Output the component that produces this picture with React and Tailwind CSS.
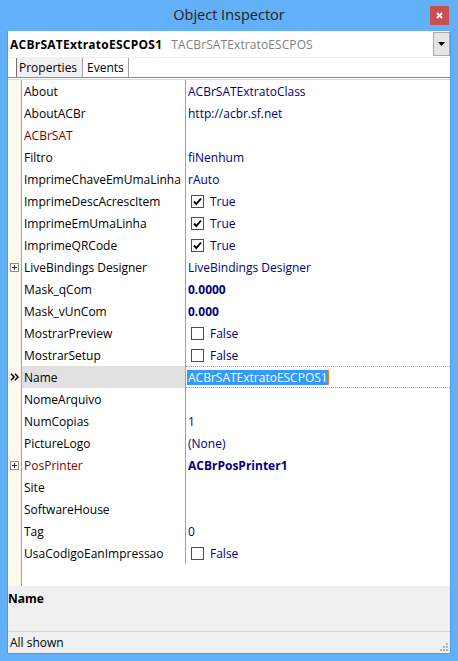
import React from "react";

const NAVY = "text-[#000080]";

const rows = [
  { name: "About", value: "ACBrSATExtratoClass" },
  { name: "AboutACBr", value: "http://acbr.sf.net" },
  { name: "ACBrSAT", maroon: true },
  { name: "Filtro", value: "fiNenhum" },
  { name: "ImprimeChaveEmUmaLinha", value: "rAuto" },
  { name: "ImprimeDescAcrescItem", check: true },
  { name: "ImprimeEmUmaLinha", check: true },
  { name: "ImprimeQRCode", check: true },
  { name: "LiveBindings Designer", plus: true, value: "LiveBindings Designer" },
  { name: "Mask_qCom", value: "0.0000", bold: true },
  { name: "Mask_vUnCom", value: "0.000", bold: true },
  { name: "MostrarPreview", check: false },
  { name: "MostrarSetup", check: false },
  { name: "Name", selected: true },
  { name: "NomeArquivo" },
  { name: "NumCopias", value: "1" },
  { name: "PictureLogo", value: "(None)" },
  { name: "PosPrinter", maroon: true, plus: true, value: "ACBrPosPrinter1", bold: true },
  { name: "Site" },
  { name: "SoftwareHouse" },
  { name: "Tag", value: "0" },
  { name: "UsaCodigoEanImpressao", check: false },
];

function PlusBox() {
  return (
    <svg width="9" height="9" viewBox="0 0 9 9" className="block">
      <rect x="0.5" y="0.5" width="8" height="8" fill="#fff" stroke="#8c8c8c" />
      <path d="M2 4.5h5M4.5 2v5" stroke="#303030" strokeWidth="1" />
    </svg>
  );
}

function Chevrons() {
  return (
    <svg width="9" height="8" viewBox="0 0 9 8" className="block">
      <path d="M1 0.8L4 4L1 7.2M5 0.8L8 4L5 7.2" fill="none" stroke="#000" strokeWidth="1.6" />
    </svg>
  );
}

function CheckBox({ checked }) {
  return (
    <svg width="13" height="13" viewBox="0 0 13 13" className="block">
      <rect x="0.5" y="0.5" width="12" height="12" fill="#fff" stroke="#4d4d4d" />
      {checked && (
        <path d="M3 6.5L5.3 9L10 3.5" fill="none" stroke="#000" strokeWidth="1.9" />
      )}
    </svg>
  );
}

function Row({ r }) {
  return (
    <div className="flex h-[22px]">
      <div className="w-[13px] shrink-0 bg-[#fdf9ee] flex items-center justify-center border-r border-[#a0a0a0] box-content">
        {r.plus && <PlusBox />}
        {r.selected && <Chevrons />}
      </div>
      <div
        className={`w-[163px] shrink-0 flex items-center pl-[2px] pt-[1px] overflow-hidden whitespace-nowrap ${
          r.selected ? "bg-[#e1e1e1]" : ""
        } ${r.maroon ? "text-[#800000]" : "text-black"}`}
      >
        {r.name}
      </div>
      <div className="w-[1px] shrink-0 bg-[#a0a0a0]" />
      {r.selected ? (
        <div className="flex-1 flex items-center pl-[1px] border-y border-dotted border-[#a0a0a0]">
          <span className="bg-[#3399ff] text-white leading-[15px] h-[15px] pl-[1px] border-r border-[#ff8000]">
            ACBrSATExtratoESCPOS1
          </span>
        </div>
      ) : r.check !== undefined ? (
        <div className={`flex-1 flex items-center pl-[5px] ${NAVY}`}>
          <CheckBox checked={r.check} />
          <span className="ml-[6px] pt-[1px]">{r.check ? "True" : "False"}</span>
        </div>
      ) : (
        <div className={`flex-1 flex items-center pl-[2px] pt-[1px] whitespace-nowrap ${NAVY} ${r.bold ? "font-bold" : ""}`}>
          {r.value || ""}
        </div>
      )}
    </div>
  );
}

function Grip() {
  const dots = [
    [6, 0],
    [3, 3], [6, 3],
    [0, 6], [3, 6], [6, 6],
  ];
  return (
    <svg width="8" height="8" viewBox="0 0 8 8" className="block">
      {dots.map(([x, y], i) => (
        <rect key={i} x={x} y={y} width="2" height="2" fill="#b4b4b4" />
      ))}
    </svg>
  );
}

export default function App() {
  return (
    <div className="w-[458px] h-[661px] bg-[#62b0f7] flex flex-col px-[7px] pb-[7px] font-['Open_Sans',sans-serif] text-[12px]">
      {/* title bar */}
      <div className="h-[31px] shrink-0 grid grid-cols-[1fr_auto_1fr] items-center">
        <div />
        <div className="text-[14.5px] text-[#1e1e1e] pb-[1px]">Object Inspector</div>
        <div className="flex justify-end pr-[2px] pb-[1px]">
          <div className="w-[19px] h-[19px] bg-[#c75050] flex items-center justify-center">
            <svg width="7" height="7" viewBox="0 0 7 7" className="block">
              <path d="M1 1L6 6M6 1L1 6" stroke="#fff" strokeWidth="1.8" />
            </svg>
          </div>
        </div>
      </div>

      {/* client */}
      <div className="flex-1 flex flex-col bg-white border-x border-b border-[#4d9ce4]">
        {/* combobox */}
        <div className="h-[26px] shrink-0 flex items-center">
          <div className="flex-1 flex items-baseline pl-[2px] pt-[1px] whitespace-nowrap">
            <span className="font-bold text-black tracking-[0.25px]">ACBrSATExtratoESCPOS1</span>
            <span className="ml-[9px] text-[#808080] tracking-[0.1px]">TACBrSATExtratoESCPOS</span>
          </div>
          <div className="w-[17px] h-[24px] bg-[#e5e5e5] border border-[#acacac] flex items-center justify-center">
            <svg width="7" height="4" viewBox="0 0 7 4" className="block">
              <path d="M0 0H7L3.5 4Z" fill="#000" />
            </svg>
          </div>
        </div>
        <div className="h-[1px] shrink-0 bg-[#f0f0f0]" />

        {/* tabs */}
        <div className="h-[19px] shrink-0 flex">
          <div className="w-[8px]" />
          <div className="w-[1px] bg-[#6e6e6e]" />
          <div className="w-[65px] bg-[#f0f0f0] flex items-center pl-[2px] pt-[1px] text-black">Properties</div>
          <div className="w-[1px] bg-[#a0a0a0]" />
          <div className="w-[45px] flex items-center pl-[4px] pt-[1px] text-black">Events</div>
          <div className="w-[1px] bg-[#a0a0a0]" />
        </div>
        <div className="h-[1px] shrink-0 bg-[#8c8c8c]" />
        <div className="h-[1px] shrink-0 bg-white" />
        <div className="h-[1px] shrink-0 bg-[#d9d9d9]" />

        {/* grid */}
        <div className="flex-1 flex flex-col">
          {rows.map((r) => (
            <Row key={r.name} r={r} />
          ))}
          <div className="flex-1 flex">
            <div className="w-[13px] shrink-0 bg-[#fdf9ee] border-r border-[#a0a0a0] box-content" />
          </div>
        </div>

        {/* description */}
        <div className="h-[45px] shrink-0 bg-[#f0f0f0] pt-[4px] font-bold text-black">
          Name
        </div>
        <div className="h-[1px] shrink-0 bg-[#d5d5d5]" />
        <div className="h-[21px] shrink-0 bg-[#f0f0f0] flex items-center justify-between pl-[2px] pr-[2px]">
          <span className="text-black">All shown</span>
          <div className="self-end mb-[2px]">
            <Grip />
          </div>
        </div>
      </div>
    </div>
  );
}
